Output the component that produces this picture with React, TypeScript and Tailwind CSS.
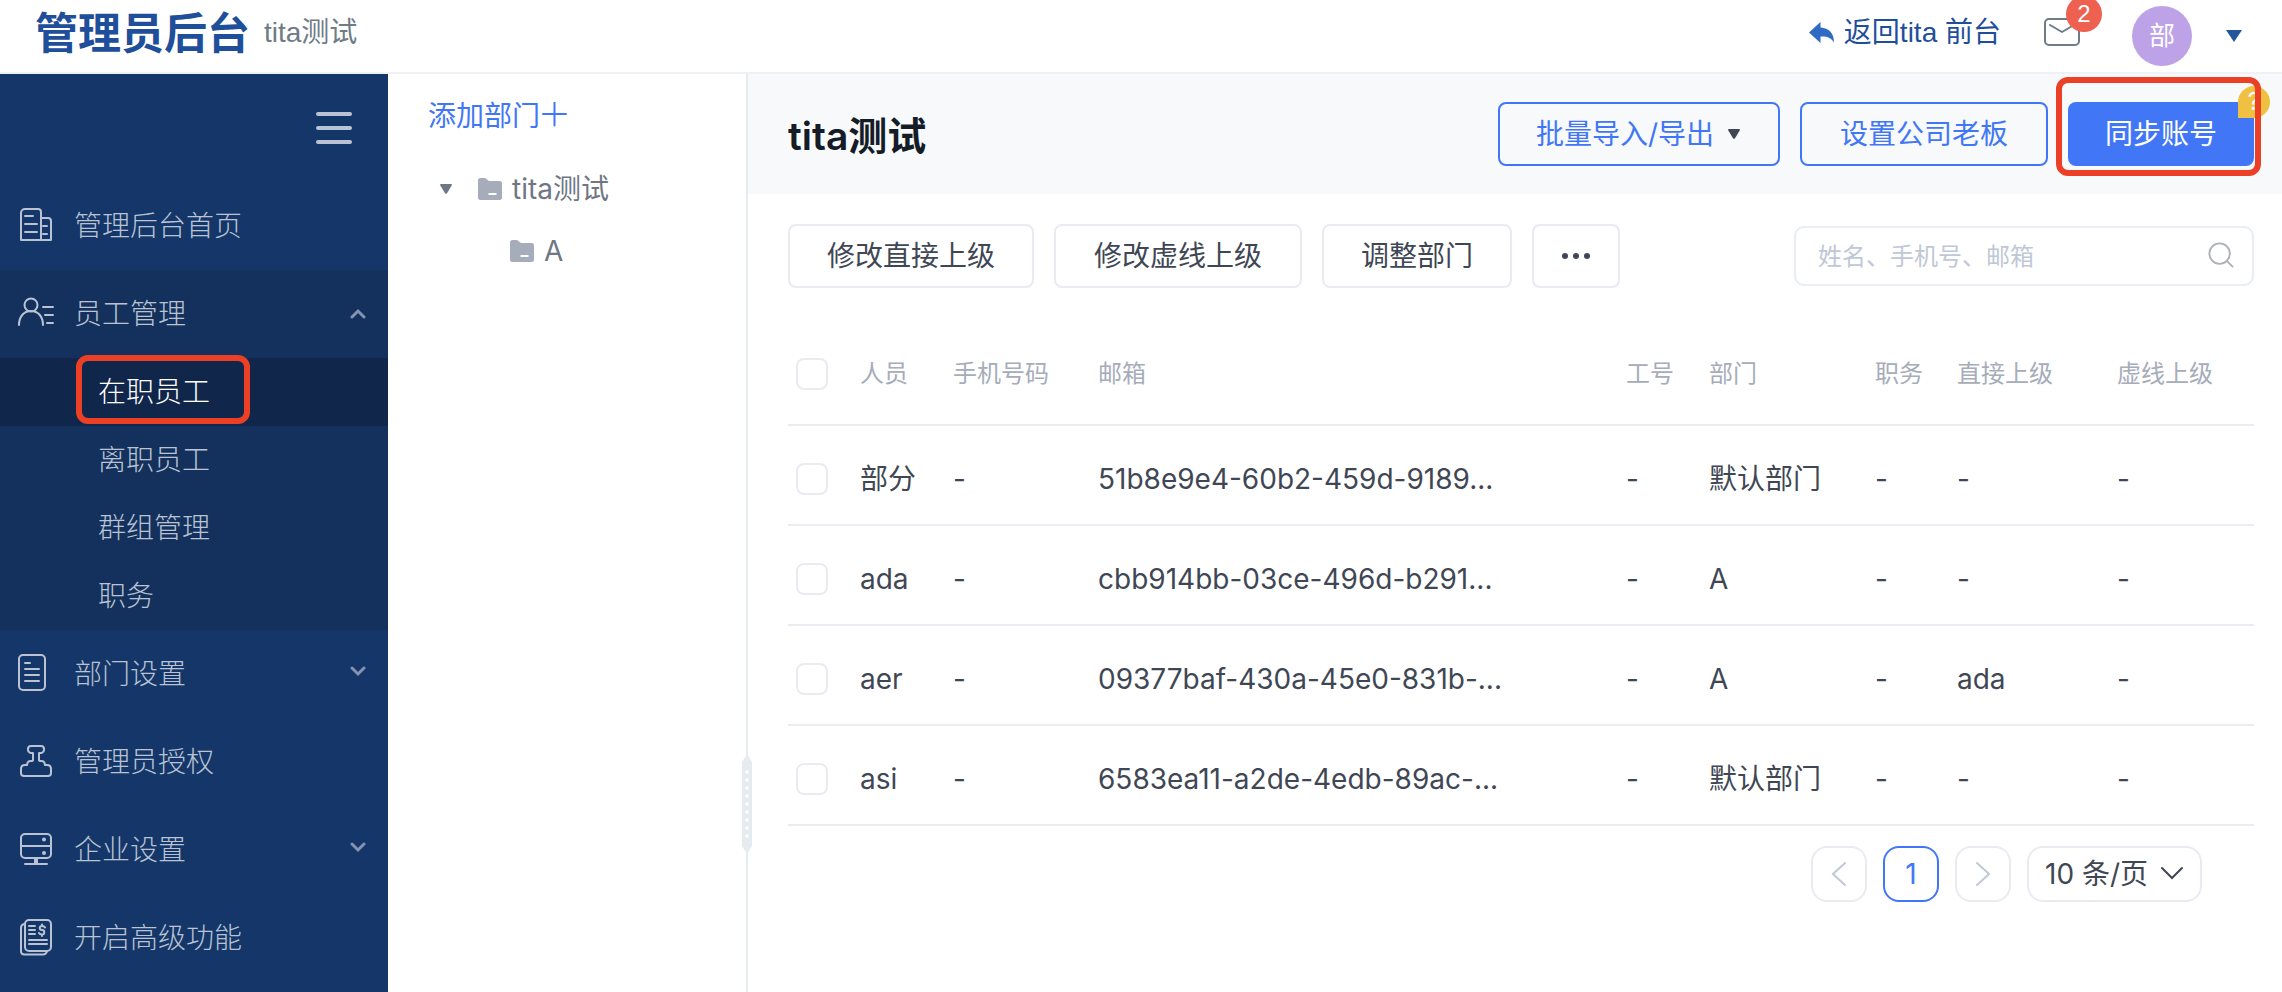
import { useState } from "react";
import type { ReactNode } from "react";

interface Employee {
  id: number;
  name: string;
  phone: string;
  email: string;
  jobNo: string;
  department: string;
  position: string;
  leader: string;
  dottedLeader: string;
}

interface MenuItem {
  key: string;
  label: string;
  icon: ReactNode;
  expandable?: boolean;
}

const EMPLOYEES: Employee[] = [
  { id: 1, name: "部分", phone: "-", email: "51b8e9e4-60b2-459d-9189...", jobNo: "-", department: "默认部门", position: "-", leader: "-", dottedLeader: "-" },
  { id: 2, name: "ada", phone: "-", email: "cbb914bb-03ce-496d-b291...", jobNo: "-", department: "A", position: "-", leader: "-", dottedLeader: "-" },
  { id: 3, name: "aer", phone: "-", email: "09377baf-430a-45e0-831b-...", jobNo: "-", department: "A", position: "-", leader: "ada", dottedLeader: "-" },
  { id: 4, name: "asi", phone: "-", email: "6583ea11-a2de-4edb-89ac-...", jobNo: "-", department: "默认部门", position: "-", leader: "-", dottedLeader: "-" },
];

const COLUMNS = [
  { title: "人员", width: "w-[93px]" },
  { title: "手机号码", width: "w-[145px]" },
  { title: "邮箱", width: "" },
  { title: "工号", width: "w-[83px]" },
  { title: "部门", width: "w-[166px]" },
  { title: "职务", width: "w-[82px]" },
  { title: "直接上级", width: "w-[160px]" },
  { title: "虚线上级", width: "w-[137px]" },
];

const SUB_MENU = ["在职员工", "离职员工", "群组管理", "职务"];

const iconProps = {
  width: 40,
  height: 40,
  viewBox: "0 0 40 40",
  fill: "none",
  stroke: "currentColor",
  strokeWidth: 2,
  strokeLinecap: "round" as const,
  strokeLinejoin: "round" as const,
  "aria-hidden": true,
};

const BuildingIcon = () => (
  <svg {...iconProps}>
    <path d="M5 34V7a4 4 0 0 1 4-4h13a3 3 0 0 1 3 3v28zM25 12h7a3 3 0 0 1 3 3v19H25" />
    <path d="M9 10h8M9 18h12M9 26h12M27 20h4M27 28h4" />
  </svg>
);

const StaffIcon = () => (
  <svg {...iconProps}>
    <circle cx="15" cy="11" r="6.5" />
    <path d="M3 31c0-8 4.500-14 12-14s12 6 12 14M27 13h10M29 21h8M31 29h6" />
  </svg>
);

const DocIcon = () => (
  <svg {...iconProps}>
    <rect x="3" y="1" width="26" height="35" rx="4" />
    <path d="M9 9h5M9 15h14M9 21h14M9 27h14" />
  </svg>
);

const StampIcon = () => (
  <svg {...iconProps}>
    <path d="M17 11h-2a3.500 3.500 0 0 1-3-4c0-2 1.500-3 3-3h10c2 0 3 1 3 3a3.500 3.500 0 0 1-3 4h-2v7c0 1 1 1 2 1 3 0 3.500 1 4 4h2c3 0 4 1.500 4 4v4c0 2-1 3-3 3H8c-2 0-3-1-3-3v-4c0-2.500 1-4 4-4h2c.5-3 1-4 4-4 1 0 2 0 2-1z" />
  </svg>
);

const ServerIcon = () => (
  <svg {...iconProps}>
    <rect x="5" y="4" width="30" height="24" rx="4" />
    <path d="M5 16h30M9 34h22" />
    <path d="M20 28v5" strokeWidth="4" strokeLinecap="butt" />
    <circle cx="28" cy="9.500" r="2" fill="currentColor" stroke="none" />
    <circle cx="28" cy="23" r="2" fill="currentColor" stroke="none" />
  </svg>
);

const BillIcon = () => (
  <svg {...iconProps}>
    <rect x="9" y="2" width="26" height="31" rx="4" />
    <path d="M8 6c-2 .5-3 2-3 4v23c0 2 1.500 3.500 3.500 3.500H27c2 0 3.500-1.500 4-3" />
    <path d="M13 8h6M13 12h6M13 16h6M13 22h18M13 26h18" />
    <path d="M29 9.500c-.5-1-1.500-1.500-3-1.500-3 0-3 4 0 4s3 4.500 0 4.500c-1.500 0-2.500-.5-3-1.500M26 6.500V8M26 16.500V18" />
  </svg>
);

const FolderIcon = () => (
  <svg width="24" height="22" viewBox="0 0 24 22" className="shrink-0" aria-hidden="true">
    <path d="M0 2.500A2.500 2.500 0 0 1 2.500 0H7l4 3h10.500A2.500 2.500 0 0 1 24 5.500v14a2.500 2.500 0 0 1-2.500 2.500h-19A2.500 2.500 0 0 1 0 19.500z" fill="#a6acb9" />
    <path d="M10.500 16h8" stroke="#fff" strokeWidth="2" />
  </svg>
);

const Caret = ({ className = "" }: { className?: string }) => (
  <svg width="12" height="10" viewBox="0 0 12 10" className={className} aria-hidden="true">
    <path d="M1 0h10q1.500 0 .8 1.300L7 9.200q-1 1.200-2 0L.2 1.300Q-.5 0 1 0z" fill="currentColor" />
  </svg>
);

const Chevron = ({ up = false }: { up?: boolean }) => (
  <svg width="16" height="16" viewBox="0 0 16 16" fill="none" stroke="currentColor" strokeWidth="3" strokeLinecap="round" className="text-[#8493b1]" aria-hidden="true">
    <path d={up ? "M2 11l6-6 6 6" : "M2 2l6 6 6-6"} />
  </svg>
);

const BOTTOM_MENU: MenuItem[] = [
  { key: "dept", label: "部门设置", icon: <DocIcon />, expandable: true },
  { key: "auth", label: "管理员授权", icon: <StampIcon /> },
  { key: "company", label: "企业设置", icon: <ServerIcon />, expandable: true },
  { key: "advanced", label: "开启高级功能", icon: <BillIcon /> },
];

function MenuRow({ label, icon, expandable, open }: { label: string; icon: ReactNode; expandable?: boolean; open?: boolean }) {
  return (
    <button type="button" aria-expanded={expandable ? !!open : undefined} className="flex h-[88px] w-full items-center pr-[22px] pl-4 text-left">
      <span className="w-[58px]">{icon}</span>
      <span className="flex-1">{label}</span>
      {expandable && <Chevron up={open} />}
    </button>
  );
}

function Header() {
  return (
    <header className="flex h-[74px] items-center border-b-2 border-[#f0f1f6] bg-white pr-10 pl-[35px] font-['Liberation_Sans','Noto_Sans_CJK_SC',sans-serif] text-[28px]">
      <h1 className="pb-1 text-[43px] leading-none font-bold text-[#1f4f9a]">管理员后台</h1>
      <span className="ml-3.5 pb-1.5 leading-10 text-[#6f7b86]">tita测试</span>
      <a href="#front" className="ml-auto flex items-center gap-2.5 pb-1.5 leading-10 text-[#1f4f9a]">
        <svg width="25" height="22" viewBox="0 0 25 22" aria-hidden="true">
          <path d="M0 10.500 11.500 0v5.500C20 6 25 11 25 20.500c-3-5-7-6.500-13.500-6V21z" fill="#2f6bc4" />
        </svg>
        返回tita 前台
      </a>
      <button type="button" aria-label="消息" className="relative ml-[43px] pb-2 text-[#6f7b86]">
        <svg width="36" height="28" viewBox="0 0 36 28" fill="none" stroke="currentColor" strokeWidth="2" strokeLinecap="round" strokeLinejoin="round" aria-hidden="true">
          <rect x="1" y="1" width="34" height="26" rx="4" />
          <path d="m6 7 12 7 12-7" />
        </svg>
        <span className="absolute -top-[22px] left-[22px] flex size-9 items-center justify-center rounded-full bg-[#ee604f] text-2xl text-white">2</span>
      </button>
      <div className="ml-[52px] flex size-[60px] items-center justify-center rounded-full bg-[#bda2e8] text-[26px] text-white">部</div>
      <button type="button" aria-label="账号菜单" className="ml-[34px]">
        <svg width="16" height="12" viewBox="0 0 16 12" aria-hidden="true">
          <path d="M0 0h16L8 12z" fill="#22569c" />
        </svg>
      </button>
    </header>
  );
}

function Sidebar() {
  const [active, setActive] = useState("在职员工");

  return (
    <nav className="w-[388px] shrink-0 bg-[#143668] font-light text-[#b9c3d4]">
      <div className="flex h-[108px] items-center justify-end pr-9">
        <button type="button" aria-label="收起菜单" className="flex flex-col gap-2.5">
          <span className="h-1 w-9 rounded-full bg-[#b9c3d4]" />
          <span className="h-1 w-9 rounded-full bg-[#b9c3d4]" />
          <span className="h-1 w-9 rounded-full bg-[#b9c3d4]" />
        </button>
      </div>
      <MenuRow label="管理后台首页" icon={<BuildingIcon />} />
      <div className="bg-[#13315c]">
        <MenuRow label="员工管理" icon={<StaffIcon />} expandable open />
        <ul>
          {SUB_MENU.map((item) => (
            <li key={item} className={`relative ${item === active ? "bg-[#10264a] text-white" : ""}`}>
              <button type="button" onClick={() => setActive(item)} className="h-[68px] w-full pl-[98px] text-left">
                {item}
              </button>
              {item === active && (
                <span className="pointer-events-none absolute -top-[3px] left-[76px] h-[69px] w-[174px] rounded-xl border-6 border-[#ec4026]" />
              )}
            </li>
          ))}
        </ul>
      </div>
      {BOTTOM_MENU.map((item) => (
        <MenuRow key={item.key} label={item.label} icon={item.icon} expandable={item.expandable} />
      ))}
    </nav>
  );
}

function DepartmentTree() {
  return (
    <aside className="relative w-[360px] shrink-0 border-r-2 border-[#e6ebef] text-[#6f7785]">
      <button type="button" className="mt-5 ml-10 flex h-11 items-center text-[#4177f6]">
        添加部门
        <svg width="28" height="28" viewBox="0 0 28 28" stroke="currentColor" strokeWidth="2" strokeLinecap="round" aria-hidden="true">
          <path d="M3 12h23M14.500 .500v23" />
        </svg>
      </button>
      <ul className="mt-5">
        <li>
          <div className="flex h-[62px] items-center pl-[52px]">
            <Caret />
            <span className="ml-[26px] mr-2.5"><FolderIcon /></span>
            tita测试
          </div>
          <ul>
            <li className="flex h-[62px] items-center pl-[122px]">
              <span className="mr-2.5"><FolderIcon /></span>
              A
            </li>
          </ul>
        </li>
      </ul>
      {/* drag handle on the divider */}
      <svg width="10" height="100" viewBox="0 0 10 100" className="absolute top-[680px] -right-1.5" aria-hidden="true">
        <path d="M5 0l5 8v84l-5 8-5-8V8z" fill="#e6ebef" />
        <path d="M5 16.500v68" stroke="#fff" strokeWidth="3" strokeDasharray="3 5" />
      </svg>
    </aside>
  );
}

function Checkbox({ label, checked, onChange }: { label: string; checked: boolean; onChange: () => void }) {
  return (
    <input
      type="checkbox"
      aria-label={label}
      checked={checked}
      onChange={onChange}
      className="block size-8 appearance-none rounded-lg border-2 border-[#eaebf0] bg-white checked:border-[#4177f6] checked:bg-[#4177f6]"
    />
  );
}

function EmployeeTable() {
  const [selected, setSelected] = useState<number[]>([]);
  const allSelected = selected.length === EMPLOYEES.length;

  const toggle = (id: number) => {
    setSelected((prev) => (prev.includes(id) ? prev.filter((i) => i !== id) : [...prev, id]));
  };

  return (
    <table className="mt-[35px] w-full table-fixed text-left">
      <thead>
        <tr className="h-[102px] border-b-2 border-[#e9edf1] text-2xl text-[#a6acb9]">
          <th className="w-[72px] pl-2">
            <Checkbox label="全选" checked={allSelected} onChange={() => setSelected(allSelected ? [] : EMPLOYEES.map((e) => e.id))} />
          </th>
          {COLUMNS.map((col) => (
            <th key={col.title} className={`font-normal whitespace-nowrap ${col.width}`}>{col.title}</th>
          ))}
        </tr>
      </thead>
      <tbody>
        {EMPLOYEES.map((row) => (
          <tr key={row.id} className="h-[100px] border-b-2 border-[#e9edf1] *:pt-2">
            <td className="pl-2">
              <Checkbox label={row.name} checked={selected.includes(row.id)} onChange={() => toggle(row.id)} />
            </td>
            <td>{row.name}</td>
            <td>{row.phone}</td>
            <td>{row.email}</td>
            <td>{row.jobNo}</td>
            <td>{row.department}</td>
            <td>{row.position}</td>
            <td>{row.leader}</td>
            <td>{row.dottedLeader}</td>
          </tr>
        ))}
      </tbody>
    </table>
  );
}

function Pagination() {
  return (
    <div className="mt-5 mr-[52px] flex justify-end gap-4">
      <button type="button" aria-label="上一页" className="flex size-14 items-center justify-center rounded-2xl border-2 border-[#eaebf0] text-[#c2c8d6]">
        <svg width="14" height="26" viewBox="0 0 14 26" fill="none" stroke="currentColor" strokeWidth="2" strokeLinecap="round" aria-hidden="true">
          <path d="M13 2 1 13l12 11" />
        </svg>
      </button>
      <button type="button" aria-current="page" className="size-14 rounded-2xl border-2 border-[#4177f6] text-[#4177f6]">1</button>
      <button type="button" aria-label="下一页" className="flex size-14 items-center justify-center rounded-2xl border-2 border-[#eaebf0] text-[#c2c8d6]">
        <svg width="14" height="26" viewBox="0 0 14 26" fill="none" stroke="currentColor" strokeWidth="2" strokeLinecap="round" aria-hidden="true">
          <path d="m1 2 12 11L1 24" />
        </svg>
      </button>
      <div className="relative">
        <select aria-label="每页条数" defaultValue="10" className="h-14 w-[175px] appearance-none rounded-2xl border-2 border-[#eaebf0] bg-white pl-4">
          <option value="10">10 条/页</option>
          <option value="20">20 条/页</option>
          <option value="50">50 条/页</option>
        </select>
        <svg width="24" height="14" viewBox="0 0 24 14" fill="none" stroke="currentColor" strokeWidth="2" strokeLinecap="round" className="pointer-events-none absolute top-5 right-[18px]" aria-hidden="true">
          <path d="M2 2l10 10L22 2" />
        </svg>
      </div>
    </div>
  );
}

export default function App() {
  return (
    <div className="flex min-h-screen flex-col bg-white font-['Inter','Noto_Sans_CJK_SC',sans-serif] text-[28px] leading-10 text-[#3f4755]">
      <Header />
      <div className="flex flex-1">
        <Sidebar />
        <DepartmentTree />
        <main className="min-w-0 flex-1">
          <div className="flex h-[120px] items-center gap-5 bg-[#f8f9fb] pr-7 pl-10">
            <h2 className="mr-auto pt-1 text-[39px] font-semibold text-[#141c28]">tita测试</h2>
            <button type="button" className="flex h-16 items-center gap-3.5 rounded-lg border-2 border-[#4177f6] pr-[38px] pl-9 text-[#4177f6]">
              批量导入/导出
              <Caret className="text-[#3f4755]" />
            </button>
            <button type="button" className="h-16 rounded-lg border-2 border-[#4177f6] px-[38px] text-[#4177f6]">设置公司老板</button>
            <div className="relative">
              <button type="button" className="h-16 rounded-lg bg-[#4177f6] px-[37px] text-white">同步账号</button>
              <span className="absolute -top-4 -right-4 flex size-8 items-center justify-center rounded-full rounded-bl-sm bg-[#efc041] text-2xl text-white">?</span>
              <span className="pointer-events-none absolute -top-[25px] -right-[7px] -bottom-2.5 -left-3 rounded-xl border-6 border-[#ec4026]" />
            </div>
          </div>
          <div className="pt-[30px] pr-7 pl-10">
            <div className="flex items-center gap-5">
              <button type="button" className="h-16 rounded-lg border-2 border-[#eaebf0] px-[37px]">修改直接上级</button>
              <button type="button" className="h-16 rounded-lg border-2 border-[#eaebf0] px-[38px]">修改虚线上级</button>
              <button type="button" className="h-16 rounded-lg border-2 border-[#eaebf0] px-[37px]">调整部门</button>
              <button type="button" aria-label="更多" className="h-16 rounded-lg border-2 border-[#eaebf0] px-7">
                <svg width="28" height="6" viewBox="0 0 28 6" fill="currentColor" aria-hidden="true">
                  <circle cx="3" cy="3" r="3" />
                  <circle cx="14" cy="3" r="3" />
                  <circle cx="25" cy="3" r="3" />
                </svg>
              </button>
              <div className="relative ml-auto">
                <input
                  type="search"
                  aria-label="搜索"
                  placeholder="姓名、手机号、邮箱"
                  className="block h-[60px] w-[460px] rounded-[10px] border-2 border-[#e9edf1] pr-16 pl-[22px] text-2xl placeholder:text-[#c0c7d6]"
                />
                <svg width="26" height="26" viewBox="0 0 28 28" fill="none" stroke="#adb0b5" strokeWidth="2" strokeLinecap="round" className="absolute top-4 right-5" aria-hidden="true">
                  <circle cx="12.500" cy="12.500" r="11" />
                  <path d="m20.500 20.500 6 6" />
                </svg>
              </div>
            </div>
            <EmployeeTable />
            <Pagination />
          </div>
        </main>
      </div>
    </div>
  );
}
